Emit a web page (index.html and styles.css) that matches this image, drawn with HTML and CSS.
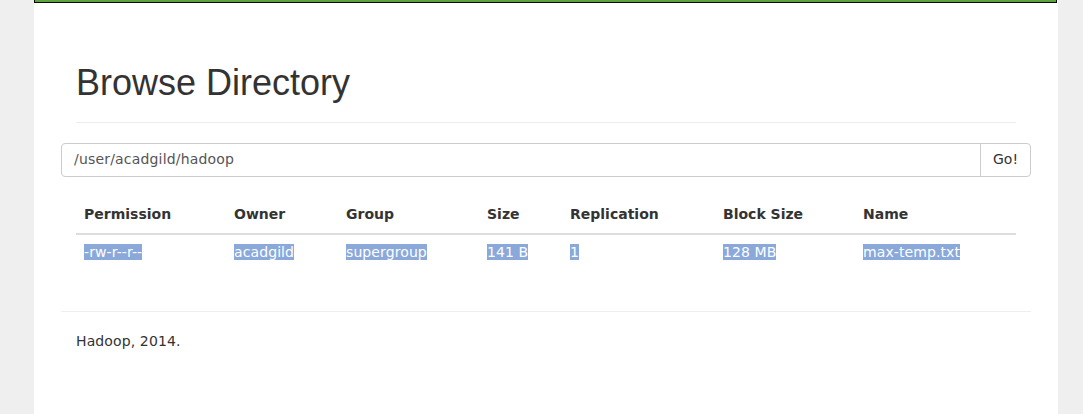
FILE: index.html
```html
<!DOCTYPE html>
<html>
<head>
<meta charset="utf-8">
<title>Browsing HDFS</title>
<link rel="stylesheet" href="styles.css">
</head>
<body>
<div class="page">
  <div class="navbar"></div>
  <div class="container">
    <div class="pad">
      <div class="page-header">
        <h1>Browse Directory</h1>
      </div>
    </div>
    <form class="input-group">
      <input class="form-control" type="text" value="/user/acadgild/hadoop">
      <button class="btn" type="button">Go!</button>
    </form>
    <div class="pad">
      <table class="table">
        <colgroup>
          <col class="c-perm"><col class="c-owner"><col class="c-group"><col class="c-size"><col class="c-repl"><col class="c-block"><col class="c-name">
        </colgroup>
        <thead>
          <tr>
            <th>Permission</th>
            <th>Owner</th>
            <th>Group</th>
            <th>Size</th>
            <th>Replication</th>
            <th>Block Size</th>
            <th>Name</th>
          </tr>
        </thead>
        <tbody>
          <tr>
            <td><span class="sel">-rw-r--r--</span></td>
            <td><span class="sel">acadgild</span></td>
            <td><span class="sel">supergroup</span></td>
            <td><span class="sel">141 B</span></td>
            <td><span class="sel">1</span></td>
            <td><span class="sel">128 MB</span></td>
            <td><span class="sel">max-temp.txt</span></td>
          </tr>
        </tbody>
      </table>
    </div>
    <hr class="rule">
    <div class="pad">
      <p class="footer">Hadoop, 2014.</p>
    </div>
  </div>
</div>
</body>
</html>
```

FILE: styles.css
```css
html, body {
  margin: 0;
  padding: 0;
}

body {
  background: #efefef;
  font-family: "DejaVu Sans", sans-serif;
  font-size: 14px;
  line-height: 20px;
  color: #333;
}

.page {
  margin-left: 34px;
  width: 1024px;
  min-height: 414px;
  background: #fff;
}

.navbar {
  height: 2px;
  width: 1021px;
  background: #5fa33e;
  border: 1px solid #080808;
  border-top: 0;
}

.container {
  width: 970px;
  margin: 0 auto;
}

.pad {
  padding: 0 15px;
}

.page-header {
  margin: 60px 0 20px;
  padding-bottom: 9px;
  border-bottom: 1px solid #eee;
}

.page-header h1 {
  margin: 0 0 10px;
  font-family: "Liberation Sans", Arial, sans-serif;
  font-size: 36px;
  font-weight: 500;
  line-height: 1.1;
  color: #333;
}

.input-group {
  display: flex;
  margin: 0 0 20px;
}

.form-control {
  flex: 1;
  height: 34px;
  box-sizing: border-box;
  margin: 0;
  padding: 5px 12px 7px;
  border: 1px solid #ccc;
  border-radius: 4px 0 0 4px;
  font-family: "DejaVu Sans", sans-serif;
  font-size: 14px;
  letter-spacing: 0.18px;
  line-height: 20px;
  color: #555;
  background: #fff;
  outline: none;
}

.btn {
  height: 34px;
  box-sizing: border-box;
  margin: 0 0 0 -1px;
  padding: 5px 12px 7px;
  border: 1px solid #ccc;
  border-radius: 0 4px 4px 0;
  background: #fff;
  font-family: "DejaVu Sans", sans-serif;
  font-size: 14px;
  line-height: 20px;
  color: #333;
}

.table {
  width: 100%;
  table-layout: fixed;
  border-collapse: collapse;
  border-spacing: 0;
  margin-bottom: 20px;
}

.c-perm { width: 150px; }
.c-owner { width: 112px; }
.c-group { width: 141px; }
.c-size { width: 83px; }
.c-repl { width: 153px; }
.c-block { width: 140px; }
.c-name { width: 161px; }

.table th,
.table td {
  text-align: left;
  line-height: 20px;
  white-space: nowrap;
}

.table th {
  padding: 7px 8px 9px;
  vertical-align: bottom;
  font-weight: bold;
  border-bottom: 2px solid #ddd;
}

.table td {
  padding: 7px 8px 9px;
  vertical-align: top;
  letter-spacing: 0.1px;
}

.sel {
  background: #8aa9da;
  color: #fff;
}

.rule {
  margin: 40px 0 19px;
  border: 0;
  border-top: 1px solid #eee;
}

.footer {
  margin: 0 0 10px;
  letter-spacing: 0.12px;
}
```
